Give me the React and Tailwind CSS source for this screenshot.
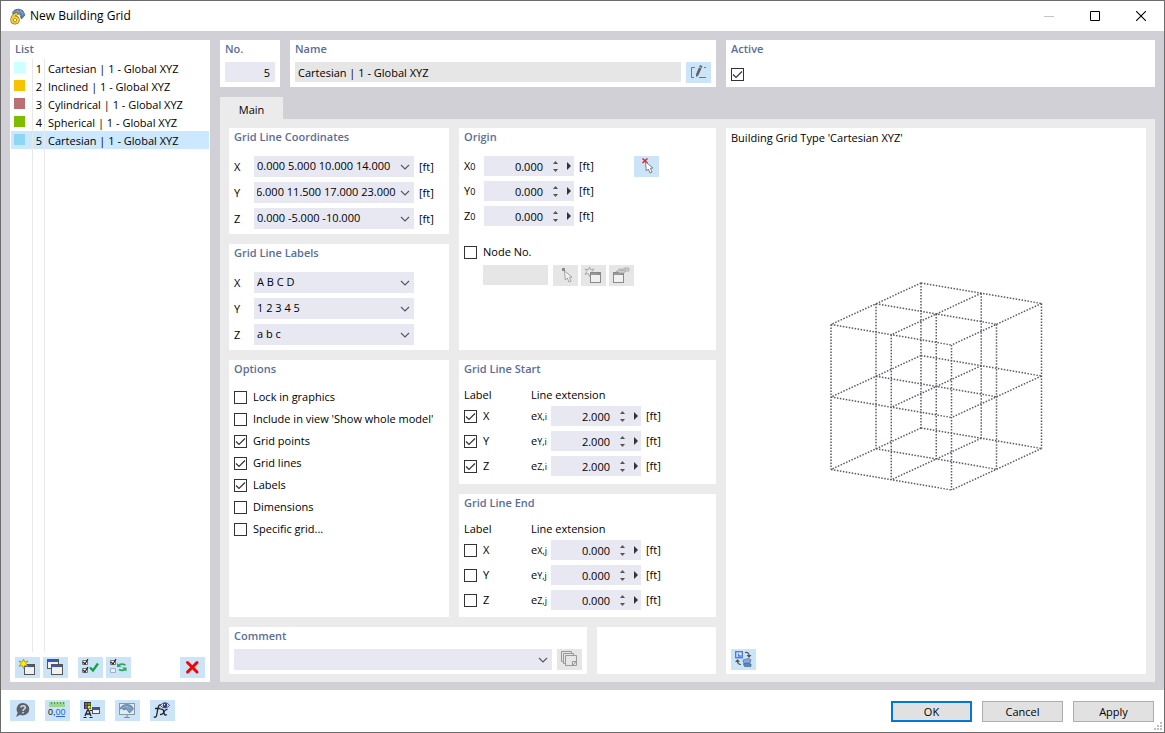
import React, { useEffect, useRef, useState } from "react";

const gridList = [
  { no: 1, name: "Cartesian | 1 - Global XYZ", color: "bg-[#ccffff]" },
  { no: 2, name: "Inclined | 1 - Global XYZ", color: "bg-[#f7c200]" },
  { no: 3, name: "Cylindrical | 1 - Global XYZ", color: "bg-[#ba7070]" },
  { no: 4, name: "Spherical | 1 - Global XYZ", color: "bg-[#7ebc00]" },
  { no: 5, name: "Cartesian | 1 - Global XYZ", color: "bg-[#8fd5f4]" },
];

const coordinates = [
  { axis: "X", value: "0.000 5.000 10.000 14.000" },
  { axis: "Y", value: "0.000 6.000 11.500 17.000 23.000" },
  { axis: "Z", value: "0.000 -5.000 -10.000" },
];

const lineLabels = [
  { axis: "X", value: "A B C D" },
  { axis: "Y", value: "1 2 3 4 5" },
  { axis: "Z", value: "a b c" },
];

const options = [
  { label: "Lock in graphics", checked: false },
  { label: "Include in view 'Show whole model'", checked: false },
  { label: "Grid points", checked: true },
  { label: "Grid lines", checked: true },
  { label: "Labels", checked: true },
  { label: "Dimensions", checked: false },
  { label: "Specific grid...", checked: false },
];

/* ---------- icons ---------- */

function Icon({ children }) {
  return (
    <svg className="block" width="25" height="21" viewBox="0 0 25 21" fill="none" aria-hidden="true">
      {children}
    </svg>
  );
}

function MiniWindow({ x, y, w = 11, h = 10, bar = "#2f55e0", line = "#555", fill = "#f1f1f1" }) {
  return (
    <g>
      <rect x={x + 0.5} y={y + 0.5} width={w} height={h} fill={fill} stroke={line} />
      <rect x={x + 1} y={y + 1} width={w - 1} height="2" fill={bar} />
      <rect x={x + w - 2} y={y + 1} width="2" height="2" fill={line} />
    </g>
  );
}

const NewIcon = () => (
  <Icon>
    <MiniWindow x={9} y={7} w={10} h={10} />
    <path d="M8.5 2l1.2 3 3.3-1-2 2.7 2 2.6-3.3-.8-1.2 3-1.2-3-3.3.8 2-2.6-2-2.7 3.300 1z" fill="#ffee00" stroke="#8b8433" strokeWidth=".7" />
  </Icon>
);

const CopyIcon = () => (
  <Icon>
    <MiniWindow x={4} y={2} w={11} h={9} />
    <MiniWindow x={8} y={7} w={11} h={10} />
  </Icon>
);

const SelectAllIcon = () => (
  <Icon>
    <path d="M4.500 3.500h5v4h-5zM4.500 11.500h5v4h-5z" fill="#fff" stroke="#777" />
    <path d="M5 5l2 2 3-5M5 13l2 2 3-5" stroke="#222" strokeWidth="1.200" />
    <path d="M12 10.500l3 3 5-7" stroke="#10a345" strokeWidth="2.200" />
  </Icon>
);

const InvertIcon = () => (
  <Icon>
    <path d="M4.500 3.500h5v4h-5z" fill="#fff" stroke="#777" />
    <path d="M4.500 11.500h5v4h-5z" fill="#e4f1fb" stroke="#a5b0b8" />
    <path d="M5 5l2 2 3-5" stroke="#222" strokeWidth="1.200" />
    <path d="M13 8c2-1.500 4-1.200 6.500 0M19 12.500c-2 1.200-4 1.200-6 0" stroke="#2fa35c" strokeWidth="1.800" />
    <path d="M11 6v4h4.500zM20.500 14.500v-4H16z" fill="#2fa35c" />
  </Icon>
);

const DeleteIcon = () => (
  <Icon>
    <path d="M7.500 5.500l9.500 9.500M17 5.500L7.500 15" stroke="#fb0000" strokeWidth="3" strokeLinecap="round" />
  </Icon>
);

const HelpIcon = () => (
  <Icon>
    <path d="M13 3a6.200 6.200 0 0 1 0 12.400c-1 0-2-.2-2.800-.6L6 17l1.700-4.300A6.200 6.200 0 0 1 13 3z" fill="#5d6368" />
    <path d="M10.800 7.500c.3-2.500 4.700-2.500 4.500.2-.1 1.600-2.300 1.500-2.300 3.300M13 12v1.500" stroke="#cbe2f5" strokeWidth="1.500" />
  </Icon>
);

const UnitsIcon = () => (
  <Icon>
    <rect x="4" y="2" width="16" height="5" fill="#9bd591" />
    <path d="M6.500 2v2M9.500 2v2M12.500 2v2M15.500 2v2M18.500 2v2" stroke="#5a9c54" />
    <text x="3" y="15" fontSize="9" fontFamily="Liberation Sans, sans-serif" fill="#111">0,<tspan fill="#2567d8">00</tspan></text>
    <path d="M11 16.500h9" stroke="#2567d8" />
  </Icon>
);

const DisplayIcon = () => (
  <Icon>
    <rect x="4" y="2" width="7" height="7" fill="#333" />
    <rect x="5" y="3" width="2.500" height="2.500" fill="#f03a2b" />
    <rect x="8" y="3" width="2.500" height="2.500" fill="#22b63a" />
    <rect x="5" y="6" width="2.500" height="2.500" fill="#3b64ff" />
    <rect x="8" y="6" width="2.500" height="2.500" fill="#ffe100" />
    <path d="M5 16l2.500-6h1l2.500 6M6 14h4" stroke="#222" strokeWidth="1.300" />
    <path d="M3.500 17.500h3M9.500 17.500h3M10 10.500h2" stroke="#222" />
    <MiniWindow x={12} y={7} w={7} h={6} />
  </Icon>
);

const MonitorIcon = () => (
  <Icon>
    <rect x="4.500" y="3.500" width="15" height="11" fill="#dcebf8" stroke="#8f979e" />
    <path d="M5 9c1-4 8-6.500 12-2.500l1.500 2.500-4 4-3-4-3 1-1.500-1.500z" fill="#6f92b6" stroke="#4a6b8f" strokeWidth=".6" />
    <path d="M6.500 8.500c4-3 8-2.500 10.500 1M10.500 5.500l4.500 6" stroke="#b4cde5" strokeWidth=".6" />
    <path d="M12 15v2M9 17.500h6" stroke="#858d94" strokeWidth="1.200" />
  </Icon>
);

const FormulaIcon = () => (
  <Icon>
    <path d="M11.500 5.500c-2-1.500-3-.2-3.500 2.500l-1.300 7c-.4 2.300-1.500 2.700-3 1.700M5 8.500h5.500" stroke="#222" strokeWidth="1.300" />
    <path d="M10.500 9.500c2.200-1 2.800 0 3.300 2.500s1 4 3 2.500M17.500 9.500c-2.200-.5-3 1.500-3.700 2.700-.8 1.500-1.700 2.700-3.800 2.200" stroke="#222" strokeWidth="1.300" />
    <path d="M10.500 5.500c2-3.500 7-3.500 9 0-2 3-7 3-9 0z" fill="#e8eefb" stroke="#2b3476" />
    <circle cx="15" cy="5.300" r="2.200" fill="#27317d" />
    <circle cx="14.500" cy="4.700" r=".7" fill="#fff" />
  </Icon>
);

const RenameIcon = () => (
  <Icon>
    <path d="M9 5.500H5.500v10H8M18 5.500h2M13 15.500h7" stroke="#777" />
    <path d="M14 3l2.500 1.200-4.200 9.300-2.200 1.500-.1-2.800z" fill="#5f6469" />
    <path d="M13 5l2.700 1.300" stroke="#cbe2f5" strokeWidth=".8" />
  </Icon>
);

function Cursor({ gray }) {
  return (
    <path
      d="M11.500 6l.8 9 2-2 1.700 4 2-.9-1.700-3.800 2.700-.3z"
      fill={gray ? "#f2f2f2" : "#fff"}
      stroke={gray ? "#9c9c9c" : "#777"}
      strokeWidth=".9"
    />
  );
}

const PickPointIcon = () => (
  <Icon>
    <path d="M8.500 2.500l5 4.500M13.500 2.500L8.500 7" stroke="#ee1c25" strokeWidth="1.500" />
    <Cursor />
  </Icon>
);

const PickNodeIcon = () => (
  <Icon>
    <rect x="9" y="3" width="3" height="3" fill="#888" />
    <Cursor gray />
  </Icon>
);

const NewGrayIcon = () => (
  <Icon>
    <path d="M8.500 2l1.200 3 3.300-1-2 2.700 2 2.600-3.300-.8-1.200 3-1.200-3-3.300.8 2-2.600-2-2.700 3.300 1z" fill="#eee" stroke="#999" strokeWidth=".8" />
    <MiniWindow x={9} y={7} w={10} h={10} bar="#999" line="#8a8a8a" />
  </Icon>
);

const EditGrayIcon = () => (
  <Icon>
    <MiniWindow x={4} y={7} w={10} h={10} bar="#999" line="#8a8a8a" />
    <path d="M7 7l3-3h4l2-1h4v3h-3l-2 2h-5l-1-1.500z" fill="#cfcfcf" stroke="#a3a3a3" strokeWidth=".7" />
    <path d="M10 5.500h5M16 3v4" stroke="#a3a3a3" strokeWidth=".7" />
  </Icon>
);

const CommentIcon = () => (
  <Icon>
    <path d="M6 12.500H4.500v-10h10V4M9 14.500H6.500v-10h10V6" stroke="#999" />
    <path d="M8.500 6.500h11v10h-11z" fill="#e6e6e6" stroke="#999" />
    <path d="M19.500 12.500h-4v4" stroke="#999" />
    <path d="M16 16l3-3" stroke="#999" />
  </Icon>
);

const ViewIcon = () => (
  <Icon>
    <rect x="4.700" y="2.700" width="6.600" height="6" fill="#e8f1ff" stroke="#4a7be6" strokeWidth="1.400" />
    <path d="M7.500 4.500v2.500h3" stroke="#4a7be6" strokeWidth="1.300" />
    <path d="M14 3.500c3-.5 4 1 4 3M6.500 12c0 2.500 1 3.500 3.500 3.500" stroke="#555" strokeWidth="1.200" />
    <path d="M15.500 6h5L18 9zM4 13l2.500-3L9 13z" fill="#555" />
    <path d="M12 11l5-1.500 3 1-1 3.500-6 1z" fill="#86a8d6" stroke="#3c5f94" strokeWidth=".6" />
    <path d="M12.500 15l3-1 4.500 1v2.500h-6.500z" fill="#5b86c2" stroke="#3c5f94" strokeWidth=".6" />
  </Icon>
);

const AppIcon = () => (
  <svg width="17" height="17" viewBox="0 0 17 17" fill="none" aria-hidden="true">
    <path d="M3.500 4.500C5 1 11 0 14 3l2 4-3.500 4-2-5-6 1z" fill="#58789f" stroke="#38587c" strokeWidth=".7" />
    <path d="M4 5c4-3 8-2 11.500 1M8 2l4 6M11 1.500l3 6" stroke="#a9c1da" strokeWidth=".6" />
    <path d="M8.500 5.500C5 6.500 3 9 3 11.800c0 1.800 1.200 3 3 3s3-1.200 3-2.800-1.200-2.600-2.800-2.600c-1.400 0-2.500.6-3 1.600" stroke="#6f5e17" strokeWidth="3.200" />
    <path d="M8.500 5.500C5 6.500 3 9 3 11.800c0 1.800 1.200 3 3 3s3-1.200 3-2.800-1.200-2.600-2.800-2.600c-1.400 0-2.500.6-3 1.600" stroke="#fad02c" strokeWidth="2.100" />
  </svg>
);

/* ---------- controls ---------- */

function IconButton({ label, disabled, children }) {
  return (
    <button
      type="button"
      aria-label={label}
      disabled={disabled}
      className="h-[21px] w-[25px] shrink-0 bg-[#cce4f7] hover:bg-[#b5d8f3] disabled:bg-[#e6e6e6]"
    >
      {children}
    </button>
  );
}

function Card({ title, className = "", children }) {
  return (
    <section className={`bg-white px-[5px] ${className}`}>
      {title && <h2 className="h-[18px] text-[11px] leading-[18px] font-semibold text-[#5b6e96]">{title}</h2>}
      {children}
    </section>
  );
}

function Check({ label, checked: initial = false, hideLabel }) {
  const [checked, setChecked] = useState(initial);
  return (
    <label className="flex items-center gap-1.5">
      <span className="relative h-[13px] w-[13px] shrink-0">
        <input
          type="checkbox"
          checked={checked}
          onChange={() => setChecked(!checked)}
          aria-label={hideLabel ? label : undefined}
          className="block h-[13px] w-[13px] appearance-none border border-[#333] bg-white"
        />
        {checked && (
          <svg className="pointer-events-none absolute inset-0" width="13" height="13" viewBox="0 0 13 13" fill="none">
            <path d="M2 6.500l3 3 6-6" stroke="#333" strokeWidth="1.200" />
          </svg>
        )}
      </span>
      {!hideLabel && <span>{label}</span>}
    </label>
  );
}

function Chevron() {
  return (
    <svg className="pointer-events-none" width="10" height="6" viewBox="0 0 10 6" fill="none" aria-hidden="true">
      <path d="M1 1l4 4 4-4" stroke="#555" strokeWidth="1.100" />
    </svg>
  );
}

// editable list field, scrolled to the end of its value
function ComboInput({ id, value }) {
  const ref = useRef(null);
  useEffect(() => {
    ref.current.scrollLeft = ref.current.scrollWidth;
  }, []);
  return (
    <div className="flex h-[21px] w-40 items-center bg-[#e8e8f2] pl-[3px]">
      <input id={id} ref={ref} defaultValue={value} className="h-full w-full min-w-0 flex-1 bg-transparent pb-0.5 outline-none" />
      <button type="button" aria-label="Open list" className="flex h-full w-[18px] shrink-0 items-center justify-center">
        <Chevron />
      </button>
    </div>
  );
}

function SelectBox({ id, value, label, className = "" }) {
  return (
    <div className={`relative ${className}`}>
      <select id={id} aria-label={label} className="block h-[21px] w-full appearance-none bg-[#e8e8f2] pr-5 pb-0.5 pl-[3px] outline-none">
        <option>{value}</option>
      </select>
      <span className="pointer-events-none absolute inset-y-0 right-1 flex items-center">
        <Chevron />
      </span>
    </div>
  );
}

function SpinBox({ id, value: initial }) {
  const [value, setValue] = useState(initial);
  const step = (d) => setValue((Number(value) + d).toFixed(3));
  return (
    <div className="flex h-5 w-[90px] items-center bg-[#e8e8f2]">
      <input
        id={id}
        value={value}
        onChange={(e) => setValue(e.target.value)}
        className="h-full w-[59px] bg-transparent pt-px text-right outline-none"
      />
      <div className="flex w-6 flex-col items-center gap-[5px]">
        <button type="button" aria-label="Increase" onClick={() => step(1)}>
          <svg className="block" width="5" height="3" viewBox="0 0 5 3"><path d="M2.500 0L5 3H0z" fill="#555" /></svg>
        </button>
        <button type="button" aria-label="Decrease" onClick={() => step(-1)}>
          <svg className="block" width="5" height="3" viewBox="0 0 5 3"><path d="M0 0h5L2.500 3z" fill="#555" /></svg>
        </button>
      </div>
      <button type="button" aria-label="More">
        <svg className="block" width="4" height="8" viewBox="0 0 4 8"><path d="M0 0l4 4-4 4z" fill="#333" /></svg>
      </button>
    </div>
  );
}

function Sub({ children }) {
  return <span className="text-[9px]">{children}</span>;
}

function LineExtension({ title, index, value, checked, className }) {
  return (
    <Card title={title} className={className}>
      <div className="mt-2 flex h-[18px] items-center">
        <span className="w-[67px]">Label</span>
        <span>Line extension</span>
      </div>
      <div className="mt-0.5 flex flex-col gap-[5px]">
        {["X", "Y", "Z"].map((axis) => (
          <div key={axis} className="flex h-5 items-center">
            <div className="w-[67px]">
              <Check label={axis} checked={checked} />
            </div>
            <label htmlFor={`ext-${index}-${axis}`} className="w-5">
              e<Sub>{axis},{index}</Sub>
            </label>
            <SpinBox id={`ext-${index}-${axis}`} value={value} />
            <span className="ml-[5px]">[ft]</span>
          </div>
        ))}
      </div>
    </Card>
  );
}

/* ---------- preview drawing ---------- */

function GridPreview() {
  const point = (i, j, k) => [91 + i * 60.25 - j * 45, 2 + i * 10.25 + j * 20.75 + k * 72.5];
  const lines = [];
  for (let a = 0; a < 3; a++) {
    for (let b = 0; b < 3; b++) {
      lines.push([point(0, a, b), point(2, a, b)]);
      lines.push([point(a, 0, b), point(a, 2, b)]);
      lines.push([point(a, b, 0), point(a, b, 2)]);
    }
  }
  return (
    <svg width="213" height="211" viewBox="0 0 213 211" role="img" aria-label="Cartesian grid">
      {lines.map(([p, q], i) => (
        <line key={i} x1={p[0]} y1={p[1]} x2={q[0]} y2={q[1]} stroke="#5c5868" strokeWidth="1.500" strokeDasharray="1.500 1.500" />
      ))}
    </svg>
  );
}

/* ---------- panels ---------- */

function TitleBar() {
  return (
    <header className="flex h-[30px] items-center bg-white pl-2">
      <AppIcon />
      <h1 className="ml-1 flex-1 text-[12px] text-black">New Building Grid</h1>
      <button type="button" aria-label="Minimize" disabled className="flex w-[46px] justify-center">
        <svg width="10" height="10" viewBox="0 0 10 10"><path d="M0 5.500h10" stroke="#c4c4c4" /></svg>
      </button>
      <button type="button" aria-label="Maximize" className="flex w-[46px] justify-center">
        <svg width="10" height="10" viewBox="0 0 10 10" fill="none"><path d="M.5.500h9v9h-9z" stroke="#000" /></svg>
      </button>
      <button type="button" aria-label="Close" className="flex w-[46px] justify-center">
        <svg width="10" height="10" viewBox="0 0 10 10"><path d="M0 0l10 10M10 0L0 10" stroke="#000" strokeWidth="1.100" /></svg>
      </button>
    </header>
  );
}

function ListPanel() {
  const [selected, setSelected] = useState(5);
  return (
    <aside className="flex w-[200px] shrink-0 flex-col bg-white">
      <h2 className="h-[19px] pl-[5px] text-[11px] leading-[18px] font-semibold text-[#5b6e96]">List</h2>
      <div className="relative mx-px flex-1">
        <table className="w-full table-fixed border-collapse">
          <tbody>
            {gridList.map((row) => (
              <tr
                key={row.no}
                onClick={() => setSelected(row.no)}
                className={`h-[18px] ${selected === row.no ? "bg-[#cce8ff]" : ""}`}
              >
                <td className="w-[21px] p-0 pt-0.5 pl-[3px]">
                  <div className={`mb-[3px] h-[11px] w-[11px] ${row.color}`}></div>
                </td>
                <td className="w-[11px] p-0 pt-0.5 pr-px text-right">{row.no}</td>
                <td className="p-0 pt-0.5 pl-[5px] whitespace-nowrap">{row.name}</td>
              </tr>
            ))}
          </tbody>
        </table>
        <div className="pointer-events-none absolute inset-y-0 left-[21px] w-[13px] border-x border-[#e8e8e8]"></div>
      </div>
      <div className="mt-[5px] flex gap-[3px] px-[5px] pb-1">
        <IconButton label="New"><NewIcon /></IconButton>
        <IconButton label="Copy"><CopyIcon /></IconButton>
        <div className="w-1"></div>
        <IconButton label="Select all"><SelectAllIcon /></IconButton>
        <IconButton label="Invert selection"><InvertIcon /></IconButton>
        <div className="flex-1"></div>
        <IconButton label="Delete"><DeleteIcon /></IconButton>
      </div>
    </aside>
  );
}

function TopCards() {
  return (
    <div className="flex gap-2.5">
      <Card title="No." className="w-[60px] shrink-0">
        <input aria-label="No." defaultValue="5" className="mt-1 mb-[5px] block h-5 w-full bg-[#e8e8f2] pt-px pr-[5px] text-right outline-none" />
      </Card>
      <Card title="Name" className="w-[426px] shrink-0">
        <div className="mt-1 flex gap-[5px] pb-1">
          <input aria-label="Name" readOnly value="Cartesian | 1 - Global XYZ" className="h-5 min-w-0 flex-1 bg-[#e6e6e6] pt-px pl-[3px] outline-none" />
          <IconButton label="Edit name"><RenameIcon /></IconButton>
        </div>
      </Card>
      <Card title="Active" className="flex-1">
        <div className="mt-2.5">
          <Check label="Active" checked hideLabel />
        </div>
      </Card>
    </div>
  );
}

function MainTab() {
  return (
    <div className="flex flex-1 gap-2.5 bg-[#ebebeb] px-[9px] pt-[9px] pb-2">
      <div className="flex w-[487px] shrink-0 flex-col gap-2.5">
        <div className="flex flex-1 gap-2.5">
          <div className="flex w-[220px] flex-col gap-2.5">
            <Card title="Grid Line Coordinates" className="pb-[5px]">
              <div className="mt-2.5 flex flex-col gap-[5px]">
                {coordinates.map((c) => (
                  <div key={c.axis} className="flex items-center">
                    <label htmlFor={`coord-${c.axis}`} className="w-5">{c.axis}</label>
                    <ComboInput id={`coord-${c.axis}`} value={c.value} />
                    <span className="ml-[5px]">[ft]</span>
                  </div>
                ))}
              </div>
            </Card>
            <Card title="Grid Line Labels" className="pb-[5px]">
              <div className="mt-2.5 flex flex-col gap-[5px]">
                {lineLabels.map((l) => (
                  <div key={l.axis} className="flex items-center">
                    <label htmlFor={`label-${l.axis}`} className="w-5">{l.axis}</label>
                    <SelectBox id={`label-${l.axis}`} value={l.value} className="w-40" />
                  </div>
                ))}
              </div>
            </Card>
            <Card title="Options" className="flex-1">
              <div className="mt-2">
                {options.map((o) => (
                  <div key={o.label} className="flex h-[22px] items-center whitespace-nowrap">
                    <Check label={o.label} checked={o.checked} />
                  </div>
                ))}
              </div>
            </Card>
          </div>

          <div className="flex flex-1 flex-col gap-2.5">
            <Card title="Origin" className="h-[222px]">
              <div className="mt-2.5 flex">
                <div className="flex w-[170px] flex-col gap-[5px]">
                  {["X", "Y", "Z"].map((axis) => (
                    <div key={axis} className="flex h-5 items-center">
                      <label htmlFor={`origin-${axis}`} className="w-5">
                        {axis}<Sub>0</Sub>
                      </label>
                      <SpinBox id={`origin-${axis}`} value="0.000" />
                      <span className="ml-[5px]">[ft]</span>
                    </div>
                  ))}
                </div>
                <IconButton label="Pick origin"><PickPointIcon /></IconButton>
              </div>
              <div className="mt-[17px] flex h-[18px] items-center">
                <Check label="Node No." />
              </div>
              <div className="mt-1 ml-[19px] flex gap-[3px]">
                <input aria-label="Node number" disabled className="mr-0.5 h-5 w-[65px] bg-[#e6e6e6]" />
                <IconButton label="Pick node" disabled><PickNodeIcon /></IconButton>
                <IconButton label="New node" disabled><NewGrayIcon /></IconButton>
                <IconButton label="Edit node" disabled><EditGrayIcon /></IconButton>
              </div>
            </Card>
            <LineExtension title="Grid Line Start" index="i" value="2.000" checked className="pb-2" />
            <LineExtension title="Grid Line End" index="j" value="0.000" checked={false} className="flex-1" />
          </div>
        </div>

        <div className="flex gap-2.5">
          <Card title="Comment" className="w-[358px]">
            <div className="mt-1 flex gap-[5px] pb-1">
              <SelectBox label="Comment" value="" className="flex-1" />
              <IconButton label="Comment templates" disabled><CommentIcon /></IconButton>
            </div>
          </Card>
          <Card className="flex-1" />
        </div>
      </div>

      <section className="flex flex-1 flex-col bg-white px-[5px]">
        <p className="h-[18px] pt-px leading-[18px]">Building Grid Type 'Cartesian XYZ'</p>
        <div className="flex flex-1 items-center justify-center">
          <GridPreview />
        </div>
        <div className="flex pt-[22px] pb-1">
          <IconButton label="Switch view"><ViewIcon /></IconButton>
        </div>
      </section>
    </div>
  );
}

function Footer() {
  return (
    <footer className="flex h-[42px] items-start bg-white pt-2.5 pr-2.5 pl-[9px]">
      <div className="flex flex-1 gap-2.5">
        <IconButton label="Help"><HelpIcon /></IconButton>
        <IconButton label="Units and decimal places"><UnitsIcon /></IconButton>
        <IconButton label="Display properties"><DisplayIcon /></IconButton>
        <IconButton label="Show in model"><MonitorIcon /></IconButton>
        <IconButton label="Formulas"><FormulaIcon /></IconButton>
      </div>
      <div className="mt-px flex gap-2.5">
        <button type="button" className="h-[21px] w-[81px] border-2 border-[#0078d7] bg-[#e1e1e1]">OK</button>
        <button type="button" className="h-[21px] w-[81px] border border-[#adadad] bg-[#e1e1e1]">Cancel</button>
        <button type="button" className="h-[21px] w-[81px] border border-[#adadad] bg-[#e1e1e1]">Apply</button>
      </div>
      <svg className="absolute right-0.5 bottom-0.5" width="8" height="8" viewBox="0 0 8 8" fill="#bfbfbf" aria-hidden="true">
        <path d="M6 0h2v2H6zM3 3h2v2H3zM6 3h2v2H6zM0 6h2v2H0zM3 6h2v2H3zM6 6h2v2H6z" />
      </svg>
    </footer>
  );
}

function App() {
  return (
    <div className="relative flex min-h-screen flex-col border border-[#6b6b6b] bg-[#d1d0d6] font-['Open_Sans','Noto_Sans',sans-serif] text-[11px] leading-4 text-black">
      <TitleBar />
      <main className="flex flex-1 gap-2.5 px-[9px] pt-[9px] pb-2">
        <ListPanel />
        <div className="flex min-w-0 flex-1 flex-col">
          <TopCards />
          <div role="tablist" className="mt-2.5 flex">
            <button type="button" role="tab" aria-selected="true" className="h-[22px] w-[63px] bg-[#ebebeb] pt-1">
              Main
            </button>
          </div>
          <MainTab />
        </div>
      </main>
      <Footer />
    </div>
  );
}

export default App;
